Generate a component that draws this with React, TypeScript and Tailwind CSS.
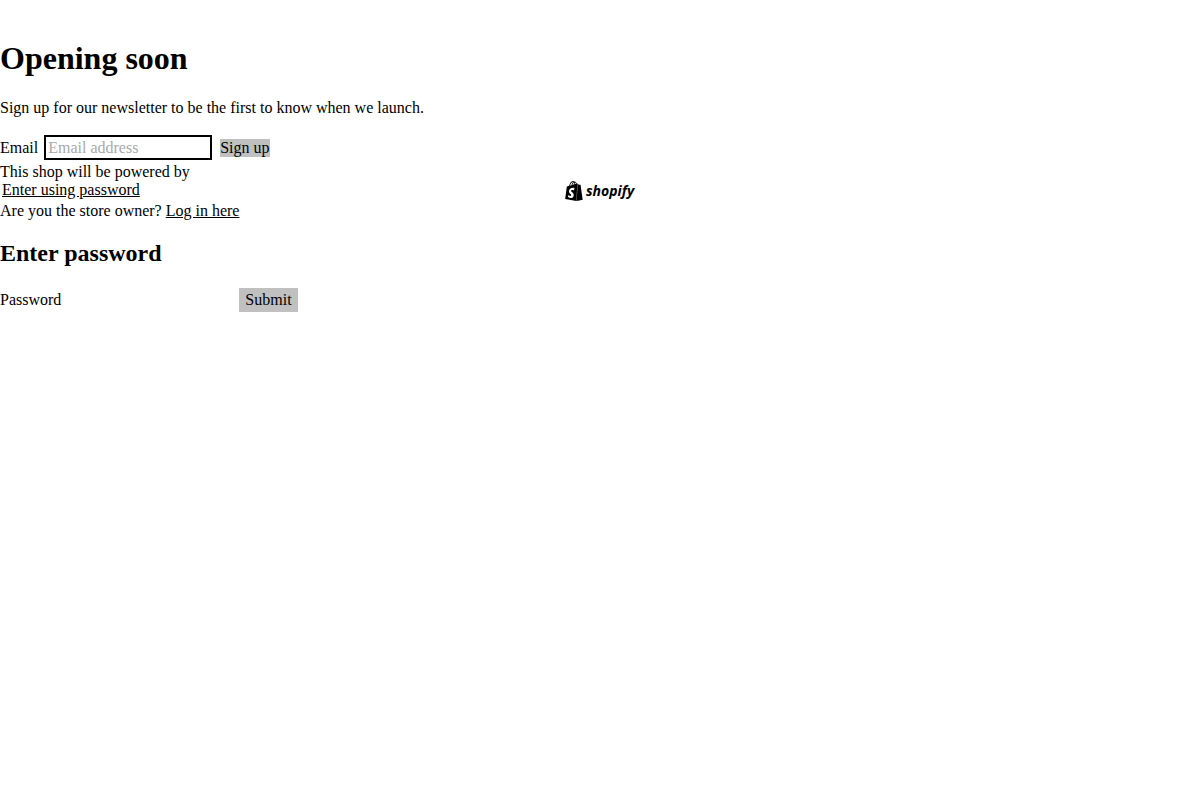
import { SiShopify } from "react-icons/si";

function ShopifyLogo() {
  return (
    <a href="#shopify" aria-label="Shopify" className="flex h-5 items-center text-black">
      <SiShopify className="h-5 w-5 shrink-0" aria-hidden="true" />
      <svg viewBox="0 0 52 20" className="h-5 w-[52px]" aria-hidden="true">
        <text
          x="2"
          y="15"
          fill="currentColor"
          className="font-['Open_Sans',sans-serif] text-[14px] font-bold italic"
        >
          shopify
        </text>
      </svg>
    </a>
  );
}

function NewsletterForm() {
  return (
    <form className="mt-[18px] flex items-center" onSubmit={(e) => e.preventDefault()}>
      <label htmlFor="email">Email</label>
      <input
        id="email"
        type="email"
        placeholder="Email address"
        className="ml-1.5 h-[25px] w-[168px] border-2 border-black bg-white px-0.5 outline-none placeholder:text-[#a9a9a9]"
      />
      <button type="submit" className="ml-2 bg-[#c0c0c0]">
        Sign up
      </button>
    </form>
  );
}

function PasswordForm() {
  return (
    <form className="mt-[21px] flex items-center" onSubmit={(e) => e.preventDefault()}>
      <label htmlFor="password">Password</label>
      <input
        id="password"
        type="password"
        className="ml-1.5 h-6 w-[168px] bg-transparent px-0.5 outline-none"
      />
      <button type="submit" className="ml-1 h-6 bg-[#c0c0c0] px-1.5">
        Submit
      </button>
    </form>
  );
}

export default function App() {
  return (
    <div className="min-h-screen bg-white pt-10 font-['Liberation_Serif',serif] text-base leading-[18px] text-black">
      <main>
        <h1 className="text-[32px] leading-9 font-bold">Opening soon</h1>
        <p className="mt-[23px]">
          Sign up for our newsletter to be the first to know when we launch.
        </p>
        <NewsletterForm />
      </main>

      <footer className="mt-[3px]">
        <p>This shop will be powered by</p>
        <div className="grid grid-cols-[1fr_auto_1fr] items-start">
          <a href="#password" className="ml-0.5 justify-self-start underline">
            Enter using password
          </a>
          <ShopifyLogo />
        </div>
        <p className="mt-px">
          Are you the store owner?{" "}
          <a href="#login" className="underline">
            Log in here
          </a>
        </p>
      </footer>

      <section>
        <h2 className="mt-[19px] text-2xl leading-7 font-bold">Enter password</h2>
        <PasswordForm />
      </section>
    </div>
  );
}
